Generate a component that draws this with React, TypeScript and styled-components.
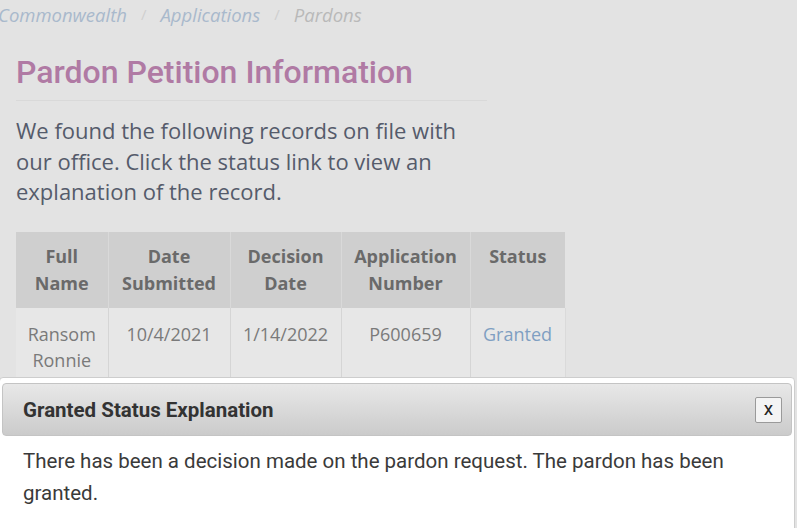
import styled, {createGlobalStyle} from 'styled-components';

const GlobalStyle = createGlobalStyle`
	html, body {
		margin: 0;
		padding: 0;
		background: #e3e3e3;
		overflow: hidden;
	}
	* {
		box-sizing: border-box;
	}
`;

interface PetitionRow {
	fullName: [string, string];
	dateSubmitted: string;
	decisionDate: string;
	applicationNumber: string;
	status: string;
}

const rows: PetitionRow[] = [
	{
		fullName: ['Ransom', 'Ronnie'],
		dateSubmitted: '10/4/2021',
		decisionDate: '1/14/2022',
		applicationNumber: 'P600659',
		status: 'Granted',
	},
];

const columns = [
	{label: ['Full', 'Name'], width: 92},
	{label: ['Date', 'Submitted'], width: 122},
	{label: ['Decision', 'Date'], width: 111},
	{label: ['Application', 'Number'], width: 129},
	{label: ['Status'], width: 95},
];

const App = () => {
	return (
		<>
			<GlobalStyle />
			<Page>
				<Breadcrumb>
					<Crumb $link>Commonwealth</Crumb>
					<Separator>/</Separator>
					<Crumb $link>Applications</Crumb>
					<Separator>/</Separator>
					<Crumb>Pardons</Crumb>
				</Breadcrumb>
				<Content>
					<Title>Pardon Petition Information</Title>
					<Intro>
						We found the following records on file with our office. Click the
						status link to view an explanation of the record.
					</Intro>
				</Content>
				<Table>
					<colgroup>
						{columns.map((col, i) => (
							<col key={i} style={{width: col.width}} />
						))}
					</colgroup>
					<thead>
						<tr>
							{columns.map((col, i) => (
								<HeadCell key={i}>
									{col.label.map((part, j) => (
										<Line key={j}>{part}</Line>
									))}
								</HeadCell>
							))}
						</tr>
					</thead>
					<tbody>
						{rows.map((row) => (
							<tr key={row.applicationNumber}>
								<Cell>
									<Line>{row.fullName[0]}</Line>
									<Line>{row.fullName[1]}</Line>
								</Cell>
								<Cell>{row.dateSubmitted}</Cell>
								<Cell>{row.decisionDate}</Cell>
								<Cell>{row.applicationNumber}</Cell>
								<Cell>
									<StatusLink href="#">{row.status}</StatusLink>
								</Cell>
							</tr>
						))}
					</tbody>
				</Table>
			</Page>
			<Dialog>
				<DialogHeader>
					<DialogTitle>Granted Status Explanation</DialogTitle>
					<CloseButton type="button">x</CloseButton>
				</DialogHeader>
				<DialogBody>
					There has been a decision made on the pardon request. The pardon has
					been granted.
				</DialogBody>
			</Dialog>
		</>
	);
};

const Page = styled.div`
	padding: 0 0 0 16px;
	font-family: 'Open Sans', sans-serif;
`;

const Breadcrumb = styled.nav`
	display: flex;
	align-items: center;
	gap: 14px;
	height: 28px;
	margin-left: -18px;
	font-style: italic;
	font-size: 18.5px;
`;

const Crumb = styled.span<{$link?: boolean}>`
	color: ${({$link}) => ($link ? '#a9b9cc' : '#b9b9b9')};
`;

const Separator = styled.span`
	color: #cfcfcf;
	font-style: normal;
	font-size: 15px;
`;

const Content = styled.div`
	width: 471px;
`;

const Title = styled.h1`
	margin: 25px 0 0;
	padding-bottom: 9px;
	border-bottom: 1px solid #d9d9d9;
	font-family: Roboto, sans-serif;
	font-weight: 500;
	font-size: 32px;
	line-height: 38px;
	color: #b07aa4;
`;

const Intro = styled.p`
	margin: 14px 0 0;
	font-size: 22px;
	line-height: 30.5px;
	color: #555b6b;
`;

const Table = styled.table`
	margin-top: 25px;
	width: 549px;
	border-collapse: collapse;
	table-layout: fixed;
`;

const HeadCell = styled.th`
	padding: 11px 2px;
	background: #cfcfcf;
	border-left: 1px solid #d9d9d9;
	font-size: 18px;
	font-weight: 700;
	line-height: 27px;
	color: #6a6a6a;
	text-align: center;
	vertical-align: top;
	&:first-child {
		border-left: none;
	}
`;

const Cell = styled.td`
	padding: 13px 2px;
	background: #e7e7e7;
	border-left: 1px solid #d5d5d5;
	font-size: 18px;
	line-height: 26.5px;
	color: #7a7a7a;
	text-align: center;
	vertical-align: top;
	&:first-child {
		border-left: none;
	}
	&:last-child {
		border-right: 1px solid #dadada;
	}
`;

const Line = styled.span`
	display: block;
`;

const StatusLink = styled.a`
	color: #7f9fc2;
	text-decoration: none;
`;

const Dialog = styled.div`
	position: fixed;
	top: 377px;
	left: -1px;
	right: 2px;
	bottom: -10px;
	padding: 5px 2px 0 2px;
	background: #fff;
	border: 1px solid #cdcdcd;
	border-radius: 4px;
	font-family: Roboto, sans-serif;
`;

const DialogHeader = styled.div`
	display: flex;
	align-items: center;
	justify-content: space-between;
	height: 53px;
	padding: 0 9px 0 20px;
	background: linear-gradient(#e8e8e8, #cbcbcb);
	border: 1px solid #c4c4c4;
	border-radius: 4px;
`;

const DialogTitle = styled.span`
	font-weight: 700;
	font-size: 20.5px;
	color: #333;
`;

const CloseButton = styled.button`
	display: flex;
	align-items: center;
	justify-content: center;
	width: 27px;
	height: 26px;
	padding: 0 0 2px;
	background: #f4f4f4;
	border: 1px solid #9a9a9a;
	border-radius: 2px;
	font-family: inherit;
	font-size: 19px;
	color: #222;
`;

const DialogBody = styled.div`
	padding: 9px 20px 0 21px;
	font-size: 20.5px;
	line-height: 32px;
	color: #3a3a3a;
`;

export default App;
